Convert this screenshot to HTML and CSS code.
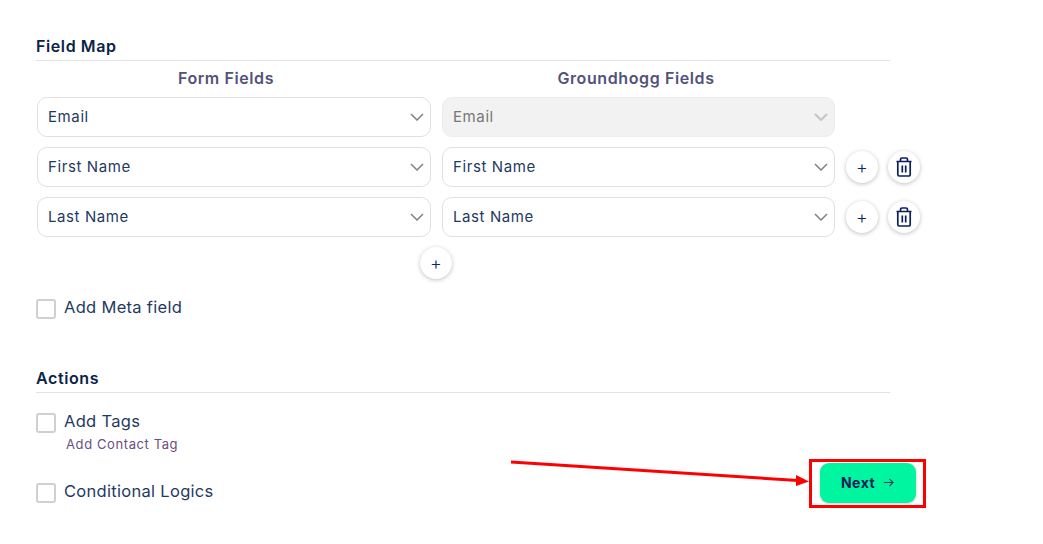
FILE: index.html
```html
<!DOCTYPE html>
<html lang="en">
<head>
  <meta charset="UTF-8">
  <meta name="viewport" content="width=device-width, initial-scale=1.0">
  <title>Field Map</title>
  <link rel="stylesheet" href="styles.css">
</head>
<body>
  <main class="page">
    <h2 class="section-title">Field Map</h2>

    <div class="map-head">
      <div>Form Fields</div>
      <div>Groundhogg Fields</div>
    </div>

    <div class="map-row">
      <div class="select"><span>Email</span><svg class="chevron" viewBox="0 0 14 8"><path d="M1 1l6 6 6-6"/></svg></div>
      <div class="select disabled"><span>Email</span><svg class="chevron" viewBox="0 0 14 8"><path d="M1 1l6 6 6-6"/></svg></div>
    </div>

    <div class="map-row">
      <div class="select"><span>First Name</span><svg class="chevron" viewBox="0 0 14 8"><path d="M1 1l6 6 6-6"/></svg></div>
      <div class="select"><span>First Name</span><svg class="chevron" viewBox="0 0 14 8"><path d="M1 1l6 6 6-6"/></svg></div>
      <div class="row-actions">
        <button class="round-btn" type="button">+</button>
        <button class="round-btn" type="button">
          <svg class="trash" viewBox="0 0 16 20"><path d="M0.500 4.500h15M4.500 4.500V2.500a1.500 1.500 0 0 1 1.500-1.500h4a1.500 1.500 0 0 1 1.500 1.500v2M1.800 4.500v13a1.500 1.500 0 0 0 1.500 1.500h9.400a1.500 1.500 0 0 0 1.500-1.500v-13M6.300 8.500v7M9.700 8.500v7"/></svg>
        </button>
      </div>
    </div>

    <div class="map-row">
      <div class="select"><span>Last Name</span><svg class="chevron" viewBox="0 0 14 8"><path d="M1 1l6 6 6-6"/></svg></div>
      <div class="select"><span>Last Name</span><svg class="chevron" viewBox="0 0 14 8"><path d="M1 1l6 6 6-6"/></svg></div>
      <div class="row-actions">
        <button class="round-btn" type="button">+</button>
        <button class="round-btn" type="button">
          <svg class="trash" viewBox="0 0 16 20"><path d="M0.500 4.500h15M4.500 4.500V2.500a1.500 1.500 0 0 1 1.500-1.500h4a1.500 1.500 0 0 1 1.500 1.500v2M1.800 4.500v13a1.500 1.500 0 0 0 1.500 1.500h9.400a1.500 1.500 0 0 0 1.500-1.500v-13M6.300 8.500v7M9.700 8.500v7"/></svg>
        </button>
      </div>
    </div>

    <div class="add-row">
      <button class="round-btn" type="button">+</button>
    </div>

    <label class="check meta-check"><span class="box"></span><span class="check-text">Add Meta field</span></label>

    <h2 class="section-title actions-title">Actions</h2>

    <label class="check tags-check"><span class="box"></span><span class="check-text">Add Tags</span></label>
    <div class="sub-link">Add Contact Tag</div>

    <div class="last-row">
      <label class="check"><span class="box"></span><span class="check-text">Conditional Logics</span></label>
      <button class="next-btn" type="button">Next
        <svg class="next-arrow" viewBox="0 0 12 12"><path d="M1 6h10M7 2l4 4-4 4"/></svg>
      </button>
    </div>
  </main>

  <!-- red annotation drawn over the screenshot -->
  <svg class="annotation" width="1043" height="544" viewBox="0 0 1043 544">
    <rect x="810.500" y="460.500" width="114" height="46" fill="none" stroke="#ff0000" stroke-width="3"/>
    <path d="M511 462L798 480.500" stroke="#ff0000" stroke-width="3" fill="none"/>
    <path d="M796 475L809 481.500L796 486z" fill="#ff0000"/>
  </svg>
</body>
</html>
```

FILE: styles.css
```css
* {
  box-sizing: border-box;
}

body {
  margin: 0;
  background: #fff;
  color: #0b2a4f;
  font-family: Inter, "Open Sans", sans-serif;
}

.page {
  position: relative;
  width: 1043px;
  height: 544px;
  padding: 36px 0 0 36px;
  overflow: hidden;
}

.section-title {
  width: 854px;
  margin: 0;
  padding-bottom: 4px;
  border-bottom: 1px solid #e2e2e2;
  font-size: 16px;
  line-height: 20px;
  font-weight: 600;
  letter-spacing: 0.6px;
  color: #0a2347;
}

.map-head {
  display: flex;
  margin: 7px 0 9px 1px;
  gap: 32px;
  font-size: 16px;
  line-height: 20px;
  font-weight: 600;
  letter-spacing: 0.6px;
  color: #52527a;
  text-align: center;
}

.map-head div {
  width: 378px;
}

.map-row {
  display: flex;
  height: 40px;
  margin: 0 0 10px 1px;
  gap: 11px;
}

.select {
  display: flex;
  align-items: center;
  justify-content: space-between;
  width: 394px;
  height: 40px;
  padding: 0 6px 2px 10px;
  border: 1px solid #e0e0e0;
  border-radius: 10px;
  font-size: 15px;
  letter-spacing: 0.6px;
  color: #1f3a5f;
}

.select:nth-child(2) {
  width: 393px;
}

.select.disabled {
  background: #f2f2f2;
  border-color: #ececec;
  color: #777;
}

.chevron {
  width: 14px;
  height: 8px;
  margin-top: 2px;
  fill: none;
  stroke: #808080;
  stroke-width: 1.500;
}

.disabled .chevron {
  stroke: #c4c4c4;
  stroke-width: 2;
}

.row-actions {
  display: flex;
  align-items: center;
  gap: 10px;
}

.round-btn {
  display: flex;
  align-items: center;
  justify-content: center;
  width: 32px;
  height: 32px;
  padding: 0;
  border: none;
  border-radius: 50%;
  background: #fff;
  box-shadow: 0 1px 4px rgba(0, 0, 0, 0.25);
  font-family: inherit;
  font-size: 18px;
  font-weight: 300;
  color: #0a2a66;
}

.trash {
  width: 16px;
  height: 20px;
  fill: none;
  stroke: #0a1f5c;
  stroke-width: 1.700;
}

.add-row {
  display: flex;
  justify-content: center;
  width: 800px;
}

.check {
  display: flex;
  align-items: flex-start;
  gap: 8px;
  font-size: 16.500px;
  letter-spacing: 0.3px;
  color: #1f3a5f;
}

.box {
  width: 20px;
  height: 20px;
  margin-top: 2px;
  border: 2px solid #cfcfd6;
  border-radius: 3px;
  background: #fff;
}

.check-text {
  margin-top: 1px;
  line-height: 18px;
}

.meta-check {
  margin-top: 18px;
}

.actions-title {
  margin-top: 49px;
}

.tags-check {
  margin-top: 18px;
}

.sub-link {
  margin: 2px 0 0 30px;
  font-size: 13px;
  line-height: 18px;
  letter-spacing: 0.6px;
  color: #6b4f7f;
}

.last-row {
  position: relative;
  display: flex;
  align-items: flex-end;
  justify-content: space-between;
  width: 880px;
  margin-top: 10px;
}

.next-btn {
  display: flex;
  align-items: center;
  justify-content: center;
  gap: 8px;
  width: 96px;
  height: 40px;
  margin-bottom: 0;
  padding: 0 1px 2px 0;
  border: none;
  border-radius: 9px;
  background: #00f5a0;
  box-shadow: 0 1px 3px rgba(0, 0, 0, 0.2);
  font-family: inherit;
  font-size: 14px;
  font-weight: 700;
  letter-spacing: 0.5px;
  color: #0f1a55;
}

.next-arrow {
  width: 11px;
  height: 11px;
  fill: none;
  stroke: #333c5c;
  stroke-width: 1.200;
}

.annotation {
  position: absolute;
  top: 0;
  left: 0;
  pointer-events: none;
}
```
